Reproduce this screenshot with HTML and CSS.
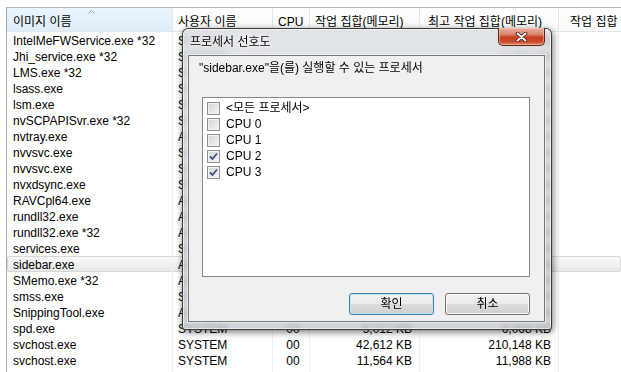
FILE: index.html
```html
<!DOCTYPE html>
<html lang="ko">
<head>
<meta charset="utf-8">
<title>프로세서 선호도</title>
<link rel="stylesheet" href="styles.css">
</head>
<body>
<div class="tm">
  <div class="grid head">
    <div class="hc sorted">이미지 이름<svg class="sort" width="7" height="4" viewBox="0 0 7 4"><polyline points="0.5,3.5 3.5,0.5 6.5,3.5" fill="none" stroke="#8fa3ba" stroke-width="1"/></svg></div>
    <div class="hc">사용자 이름</div>
    <div class="hc">CPU</div>
    <div class="hc">작업 집합(메모리)</div>
    <div class="hc peak">최고 작업 집합(메모리)</div>
    <div class="hc last">작업 집합</div>
  </div>
  <div class="rows">
    <div class="grid row"><span>IntelMeFWService.exe *32</span><span>SYSTEM</span><span class="c"></span><span class="r"></span><span class="r">3,164 KB</span><span></span></div>
    <div class="grid row"><span>Jhi_service.exe *32</span><span>SYSTEM</span><span class="c"></span><span class="r"></span><span class="r">3,004 KB</span><span></span></div>
    <div class="grid row"><span>LMS.exe *32</span><span>SYSTEM</span><span class="c"></span><span class="r"></span><span class="r">4,392 KB</span><span></span></div>
    <div class="grid row"><span>lsass.exe</span><span>SYSTEM</span><span class="c"></span><span class="r"></span><span class="r">13,208 KB</span><span></span></div>
    <div class="grid row"><span>lsm.exe</span><span>SYSTEM</span><span class="c"></span><span class="r"></span><span class="r">4,720 KB</span><span></span></div>
    <div class="grid row"><span>nvSCPAPISvr.exe *32</span><span>SYSTEM</span><span class="c"></span><span class="r"></span><span class="r">4,512 KB</span><span></span></div>
    <div class="grid row"><span>nvtray.exe</span><span>Admin</span><span class="c"></span><span class="r"></span><span class="r">7,988 KB</span><span></span></div>
    <div class="grid row"><span>nvvsvc.exe</span><span>SYSTEM</span><span class="c"></span><span class="r"></span><span class="r">5,872 KB</span><span></span></div>
    <div class="grid row"><span>nvvsvc.exe</span><span>SYSTEM</span><span class="c"></span><span class="r"></span><span class="r">7,216 KB</span><span></span></div>
    <div class="grid row"><span>nvxdsync.exe</span><span>SYSTEM</span><span class="c"></span><span class="r"></span><span class="r">10,144 KB</span><span></span></div>
    <div class="grid row"><span>RAVCpl64.exe</span><span>Admin</span><span class="c"></span><span class="r"></span><span class="r">8,760 KB</span><span></span></div>
    <div class="grid row"><span>rundll32.exe</span><span>Admin</span><span class="c"></span><span class="r"></span><span class="r">6,336 KB</span><span></span></div>
    <div class="grid row"><span>rundll32.exe *32</span><span>Admin</span><span class="c"></span><span class="r"></span><span class="r">5,448 KB</span><span></span></div>
    <div class="grid row"><span>services.exe</span><span>SYSTEM</span><span class="c"></span><span class="r"></span><span class="r">10,012 KB</span><span></span></div>
    <div class="grid row sel"><span>sidebar.exe</span><span>Admin</span><span class="c"></span><span class="r"></span><span class="r">31,208 KB</span><span></span></div>
    <div class="grid row"><span>SMemo.exe *32</span><span>Admin</span><span class="c"></span><span class="r"></span><span class="r">11,540 KB</span><span></span></div>
    <div class="grid row"><span>smss.exe</span><span>SYSTEM</span><span class="c"></span><span class="r"></span><span class="r">1,168 KB</span><span></span></div>
    <div class="grid row"><span>SnippingTool.exe</span><span>Admin</span><span class="c"></span><span class="r"></span><span class="r">15,304 KB</span><span></span></div>
    <div class="grid row"><span>spd.exe</span><span>SYSTEM</span><span class="c">00</span><span class="r">5,012 KB</span><span class="r">6,068 KB</span><span></span></div>
    <div class="grid row"><span>svchost.exe</span><span>SYSTEM</span><span class="c">00</span><span class="r">42,612 KB</span><span class="r">210,148 KB</span><span></span></div>
    <div class="grid row"><span>svchost.exe</span><span>SYSTEM</span><span class="c">00</span><span class="r">11,564 KB</span><span class="r">11,988 KB</span><span></span></div>
    <div class="grid row"><span>svchost.exe</span><span>LOCAL SERVICE</span><span class="c">00</span><span class="r">18,224 KB</span><span class="r">22,372 KB</span><span></span></div>
  </div>
</div>

<div class="dlg">
  <div class="titlebar">프로세서 선호도</div>
  <div class="close"><svg width="13" height="10" viewBox="0 0 13 10"><path d="M2.5 1.5 L10.5 8.5 M10.5 1.5 L2.5 8.5" stroke="#4a1408" stroke-width="3.6" stroke-linecap="round"/><path d="M2.5 1.5 L10.5 8.5 M10.5 1.5 L2.5 8.5" stroke="#ffffff" stroke-width="2" stroke-linecap="round"/></svg></div>
  <div class="client">
    <div class="label">"sidebar.exe"을(를) 실행할 수 있는 프로세서</div>
    <div class="listbox">
      <div class="item"><span class="cb"></span>&lt;모든 프로세서&gt;</div>
      <div class="item"><span class="cb"></span>CPU 0</div>
      <div class="item"><span class="cb"></span>CPU 1</div>
      <div class="item"><span class="cb"><svg width="11" height="11" viewBox="0 0 11 11"><path d="M2 5.5 L4.5 8 L9 2.5" fill="none" stroke="#3a4f8a" stroke-width="1.8"/></svg></span>CPU 2</div>
      <div class="item"><span class="cb"><svg width="11" height="11" viewBox="0 0 11 11"><path d="M2 5.5 L4.5 8 L9 2.5" fill="none" stroke="#3a4f8a" stroke-width="1.8"/></svg></span>CPU 3</div>
    </div>
    <div class="buttons">
      <div class="btn default">확인</div>
      <div class="btn">취소</div>
    </div>
  </div>
</div>
</body>
</html>
```

FILE: styles.css
```css
html, body {
  margin: 0;
  padding: 0;
  background: #ffffff;
  overflow: hidden;
}

body {
  font-family: "Liberation Sans", "Noto Sans CJK KR", sans-serif;
  font-size: 12px;
  line-height: 16px;
  color: #000;
  width: 621px;
  height: 372px;
}

.tm {
  margin: 7px 0 0 6px;
  border-top: 1px solid #b8b8b8;
  border-left: 1px solid #a8a8a8;
  height: 364px;
  overflow: hidden;
}

.grid {
  display: grid;
  grid-template-columns: 165px 100px 37px 110px 139px 120px;
}

.head {
  height: 24px;
  box-sizing: border-box;
  border-bottom: 1px solid #e2e6ea;
  background: linear-gradient(#ffffff, #f8f9fa);
}

.hc {
  position: relative;
  padding: 6px 0 0 5px;
  white-space: nowrap;
  overflow: hidden;
  border-left: 1px solid #e4e6e8;
}

.hc.sorted {
  border-left: none;
  padding-left: 6px;
  background: linear-gradient(#eaf4fc, #dfedf9);
}

.hc.peak { padding-left: 8px; }
.hc.last { padding-left: 11px; }

.sort {
  position: absolute;
  left: 81px;
  top: 2px;
}

.row {
  height: 16px;
}

.row > span {
  white-space: nowrap;
  overflow: hidden;
  border-left: 1px solid #efefef;
  padding: 1px 0 0 5px;
}

.row > span:first-child {
  border-left: none;
  padding-left: 6px;
}

.row > span.c {
  text-align: center;
  padding-left: 4px;
}

.row > span.r {
  text-align: right;
  padding-right: 7px;
  padding-left: 0;
}

.row.sel {
  background: linear-gradient(#fbfbfb, #e7e7e7);
  box-shadow: inset 0 0 0 1px #d7d7d7;
  border-radius: 3px;
}

/* Dialog window */
.dlg {
  position: absolute;
  left: 182px;
  top: 28px;
  width: 370px;
  height: 302px;
  box-sizing: border-box;
  border: 1px solid rgba(30, 30, 30, 0.85);
  border-radius: 6px 6px 3px 3px;
  background: linear-gradient(rgba(218, 221, 225, 0.78), rgba(196, 200, 205, 0.78));
  backdrop-filter: blur(3px);
  box-shadow: inset 0 0 0 1px rgba(255, 255, 255, 0.6), 1px 2px 7px rgba(0, 0, 0, 0.55);
  padding: 0 6px 7px 5px;
  display: flex;
  flex-direction: column;
}

.titlebar {
  height: 26px;
  display: flex;
  align-items: center;
  padding-left: 2px;
  text-shadow: 0 0 6px #fff, 0 0 3px #fff;
}

.close {
  position: absolute;
  left: 315px;
  top: -1px;
  width: 47px;
  height: 18px;
  box-sizing: border-box;
  border: 1px solid #5c2418;
  border-top: none;
  border-radius: 0 0 5px 5px;
  background: linear-gradient(#eab0a2 0%, #dc8a74 35%, #c4401f 55%, #c94a2b 80%, #df8a6c 100%);
  box-shadow: inset 0 0 0 1px rgba(255, 210, 190, 0.5);
  display: flex;
  align-items: center;
  justify-content: center;
}

.client {
  flex: 1;
  border: 1px solid #777777;
  background: #f0f0f0;
  box-shadow: 0 0 0 1px rgba(255, 255, 255, 0.55);
  display: flex;
  flex-direction: column;
  padding: 4px 14px 0 10px;
}

.label {
  height: 16px;
  white-space: nowrap;
}

.listbox {
  margin: 21px 0 0 3px;
  height: 180px;
  box-sizing: border-box;
  border: 1px solid #828790;
  background: #ffffff;
  padding-top: 2px;
}

.item {
  height: 16px;
  display: flex;
  align-items: center;
  gap: 6px;
  padding-left: 4px;
}

.cb {
  width: 13px;
  height: 13px;
  box-sizing: border-box;
  border: 1px solid #8e8f8f;
  background: linear-gradient(135deg, #d2d3d4, #f6f6f6);
  box-shadow: inset 0 0 0 1px #f2f2f2;
  display: flex;
  align-items: center;
  justify-content: center;
}

.buttons {
  margin-top: 16px;
  display: flex;
  justify-content: flex-end;
  gap: 11px;
}

.btn {
  width: 85px;
  height: 22px;
  box-sizing: border-box;
  border: 1px solid #707070;
  border-radius: 3px;
  background: linear-gradient(#f2f2f2 0%, #ebebeb 50%, #dddddd 50%, #cfcfcf 100%);
  box-shadow: inset 0 0 0 1px #fbfbfb;
  display: flex;
  align-items: center;
  justify-content: center;
}

.btn.default {
  border-color: #3c7fb1;
  box-shadow: inset 0 0 0 1px #bfe6f8;
}
```
